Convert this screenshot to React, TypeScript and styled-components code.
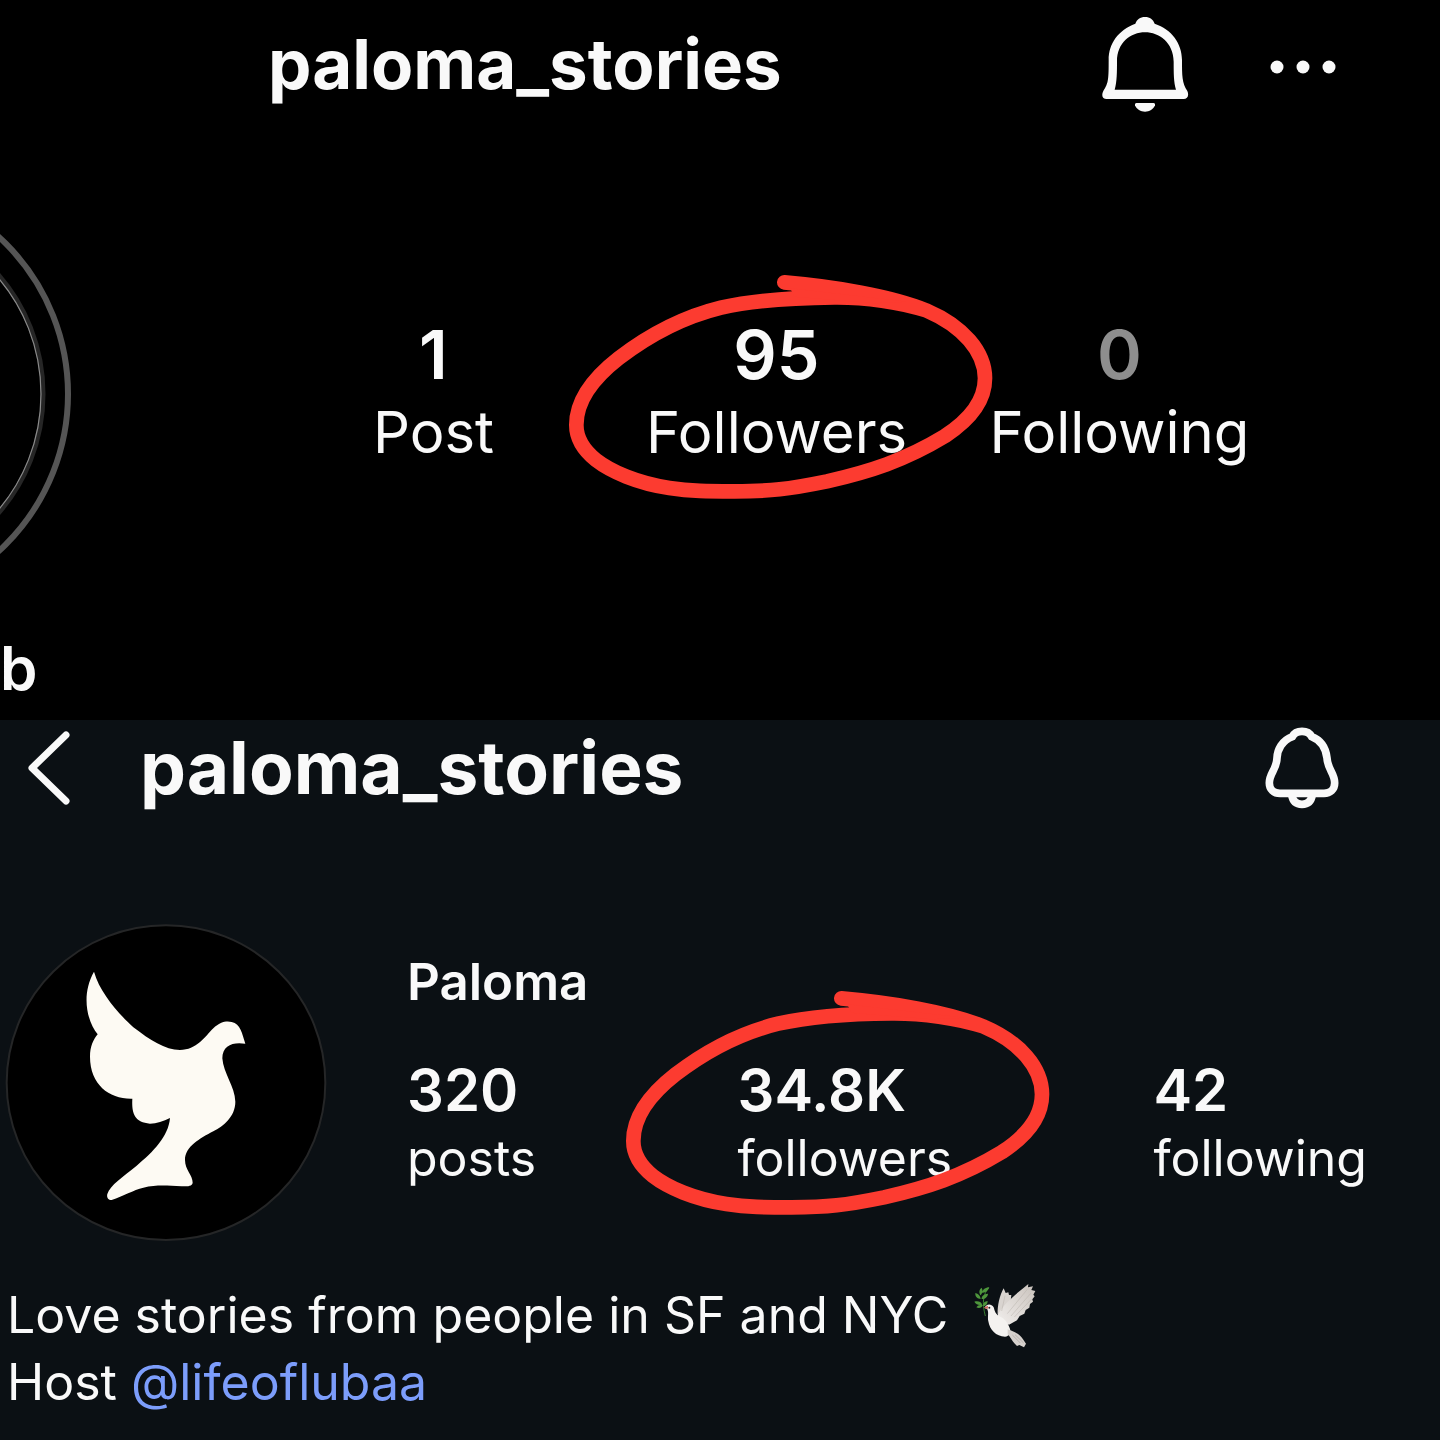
import React from "react";
import styled, { createGlobalStyle } from "styled-components";

const GlobalStyle = createGlobalStyle`
  *, *::before, *::after { box-sizing: border-box; }
  body {
    margin: 0;
    background: #0b1014;
    color: #f9f9f9;
    font-family: Inter, "Liberation Sans", sans-serif;
  }
  h1, h2, p, ul { margin: 0; padding: 0; }
  ul { list-style: none; }
  svg { display: block; flex: none; }
`;

const Page = styled.main`
  display: grid;
  grid-template-rows: 1fr 1fr;
  min-height: 100vh;
`;

const Panel = styled.section<{ $tone: string }>`
  display: flex;
  flex-direction: column;
  background: ${(p) => p.$tone};
  overflow: hidden;
`;

const IconButton = styled.button`
  display: block;
  padding: 0;
  border: 0;
  background: none;
  color: inherit;
  cursor: pointer;
`;

const BeforeHeader = styled.header`
  display: flex;
  align-items: center;
  gap: 80px;
  padding: 16px 103px 0 268px;
`;

const AfterHeader = styled.header`
  display: flex;
  align-items: center;
  gap: 68px;
  padding: 6px 100px 0 26px;
`;

const Username = styled.h1<{ $size: number }>`
  flex: 1;
  font-size: ${(p) => p.$size}px;
  line-height: 84px;
  font-weight: 700;
`;

const BeforeProfile = styled.div`
  display: flex;
  align-items: center;
  gap: 190px;
  margin-top: 120px;
  padding-right: 149px;
`;

const CenteredStats = styled.ul`
  flex: 1;
  display: grid;
  grid-template-columns: repeat(3, 1fr);
  text-align: center;
`;

const SpreadStats = styled.ul`
  display: flex;
  justify-content: space-between;
`;

const StatItem = styled.li`
  display: flex;
  flex-direction: column;
  position: relative;
`;

const Count = styled.strong<{ $large?: boolean; $muted?: boolean }>`
  font-size: ${(p) => (p.$large ? 68 : 58)}px;
  line-height: ${(p) => (p.$large ? 80 : 68)}px;
  font-weight: 600;
  color: ${(p) => (p.$muted ? "#8e8e8e" : "inherit")};
`;

const StatLabel = styled.span<{ $large?: boolean }>`
  font-size: ${(p) => (p.$large ? 58 : 50)}px;
  line-height: ${(p) => (p.$large ? 76 : 68)}px;
`;

const MarkerSvg = styled.svg<{ $large?: boolean }>`
  position: absolute;
  top: ${(p) => (p.$large ? "calc(50% - 7px)" : "calc(50% - 23px)")};
  left: ${(p) => (p.$large ? "calc(50% + 4px)" : "calc(50% - 7px)")};
  width: 480px;
  height: 250px;
  transform: translate(-50%, -50%);
  pointer-events: none;
`;

const NameTail = styled.p`
  margin-top: 76px;
  font-size: 60px;
  line-height: 80px;
  font-weight: 600;
`;

const AfterProfile = styled.div`
  display: flex;
  align-items: flex-start;
  gap: 80px;
  margin-top: 114px;
  padding: 0 73px 0 5px;
`;

const Details = styled.div`
  flex: 1;
  display: flex;
  flex-direction: column;
  gap: 40px;
  padding-top: 24px;
`;

const DisplayName = styled.h2`
  font-size: 51px;
  line-height: 68px;
  font-weight: 600;
`;

const Bio = styled.p`
  margin-top: 40px;
  padding: 0 7px;
  font-size: 50px;
  line-height: 67px;
`;

const BioLine = styled.span`
  display: flex;
  align-items: center;
  gap: 25px;
`;

const Mention = styled.a`
  color: #7c9dfb;
  text-decoration: none;
`;

function Marker({ large }: { large?: boolean }) {
  return (
    <MarkerSvg $large={large} viewBox="0 0 1440 750" fill="none" aria-hidden="true">
      <path
        stroke="#fc3b30"
        strokeWidth="44"
        strokeLinecap="round"
        strokeLinejoin="round"
        d="M730 67C880 80 1050 108 1158 152C1265 198 1332 275 1332 355C1332 430 1275 487 1212 528C1090 602 985 635 858 664C740 688 690 694 580 694C500 694 450 694 385 684C290 670 210 635 165 600C125 568 106 535 106 495C106 415 165 348 233 295C320 228 430 170 540 143C650 118 770 113 880 112C970 111 1080 126 1158 152"
      />
      <path fill="#fc3b30" d="M748 85L1100 125L1000 130L760 110Z" />
    </MarkerSvg>
  );
}

function DomeBell() {
  return (
    <svg width="88" height="96" viewBox="63 48 264 288" fill="currentColor" aria-hidden="true">
      <path
        fillRule="evenodd"
        d="M195 51C210 51 219 58 224 71C275 88 306 130 306 180C306 225 306 250 322 273C328 287 322 297 311 297H80C68 297 63 287 70 273C86 250 86 235 86 180C86 130 115 90 166 71C171 58 180 51 195 51Z
        M195 97C238 97 280 128 281 185C281 220 281 245 288 269H104C111 245 111 215 111 185C111 128 152 97 195 97Z"
      />
      <path d="M169 309H221Q227 310 225 316C220 328 208 335 195 335C182 335 170 328 165 316Q163 310 169 309Z" />
    </svg>
  );
}

function FlaredBell() {
  return (
    <svg width="76" height="84" viewBox="72 34 228 252" fill="none" stroke="currentColor" strokeWidth="23" aria-hidden="true">
      <path
        strokeLinejoin="round"
        d="M186 50C172 50 162 56 157 66C126 78 112 105 111 130C110 165 88 175 88 205C88 225 102 236 120 236H252C270 236 284 225 284 205C284 175 263 165 261 130C258 105 246 78 215 66C210 56 200 50 186 50Z"
      />
      <path d="M155 240C158 260 170 269 186 269C202 269 214 260 217 240" />
    </svg>
  );
}

function Dots() {
  return (
    <svg width="68" height="20" viewBox="0 0 68 20" fill="currentColor" aria-hidden="true">
      <circle cx="8" cy="13" r="6.5" />
      <circle cx="34" cy="13" r="6.5" />
      <circle cx="60" cy="13" r="6.5" />
    </svg>
  );
}

function BackChevron() {
  return (
    <svg width="46" height="76" viewBox="0 0 46 76" fill="none" stroke="currentColor" strokeWidth="7" strokeLinecap="round" strokeLinejoin="round" aria-hidden="true">
      <path d="M40 5L6 38L40 71" />
    </svg>
  );
}

function StoryRing() {
  return (
    <svg width="72" height="320" viewBox="0 0 72 320" fill="none" overflow="visible" aria-hidden="true">
      <circle cx="-145" cy="162" r="213" stroke="#555" strokeWidth="6" />
      <circle cx="-138" cy="162" r="181" stroke="#262626" strokeWidth="5" />
      <circle cx="-138" cy="162" r="179" stroke="#8a8a8a" strokeWidth="1.2" />
    </svg>
  );
}

function DoveAvatar() {
  return (
    <svg width="322" height="318" viewBox="15 42 966 954" role="img" aria-label="Paloma">
      <ellipse cx="498" cy="518" rx="478" ry="472" fill="#000" stroke="#252627" strokeWidth="6" />
      <path
        fill="#fdfaf3"
        d="M282 185C300 250 360 315 400 352C450 390 495 420 540 420C590 420 615 380 640 355C660 335 680 332 695 336C722 342 726 370 736 401C700 395 667 405 667 445C670 490 705 530 706 575C706 620 670 648 640 664C600 685 555 710 555 750C555 780 578 795 578 818C576 830 560 829 545 829C500 827 470 824 430 833C400 840 370 858 335 870C322 870 320 860 322 852C330 825 370 800 410 767C460 725 505 680 510 624C490 634 470 641 450 641C400 638 395 605 397 566C330 568 270 525 270 440C270 410 280 388 293 373C265 340 240 260 282 185Z"
      />
    </svg>
  );
}

function DoveEmoji() {
  return (
    <svg width="64" height="66" viewBox="42 38 192 198" role="img" aria-label="dove">
      <defs>
        <linearGradient id="wing" x1="0" y1="1" x2="1" y2="0">
          <stop offset="0" stopColor="#f1eeec" />
          <stop offset="1" stopColor="#c9c2bc" />
        </linearGradient>
      </defs>
      <path fill="#d9d4d0" d="M116 132C115 105 122 75 134 54L140 68L148 66L150 74L157 74L150 135Z" />
      <path fill="url(#wing)" d="M116 134C130 105 165 75 208 41L207 51L222 48L217 59L229 62L223 73L227 78L220 87L222 94L213 101L211 112L200 119L196 130L182 137L174 150L150 163L122 152Z" />
      <path fill="none" stroke="#b9b2ac" strokeWidth="1.5" d="M145 130L205 57M156 137L216 68M166 140L218 86M128 122L138 76" />
      <path fill="#f4f2f0" d="M77 113C80 102 96 98 104 111C107 122 110 132 121 138C138 145 146 158 152 173C158 187 151 198 138 199C111 199 92 178 88 153C85 140 90 128 85 117Z" />
      <path fill="#d6d1cd" d="M146 177L158 181C172 187 184 194 192 207L201 220L195 231L181 224L174 227L166 219C160 213 153 198 146 192Z" />
      <path fill="none" stroke="#aaa39e" strokeWidth="2" d="M160 194L184 218M168 193L194 218" />
      <path fill="#cb6259" d="M73 112L87 106L86 116Z" />
      <circle cx="91" cy="112" r="3" fill="#292320" />
      <path fill="none" stroke="#397e31" strokeWidth="3" d="M89 53C73 70 68 96 79 137" />
      <path fill="#4e963c" d="M91 51C79 51 71 58 69 67C80 68 87 62 91 51ZM68 52C60 57 59 67 65 75C71 67 72 60 68 52ZM87 70C74 71 67 78 68 86C78 87 86 80 87 70ZM49 68C48 80 55 85 65 86C64 76 58 70 49 68ZM46 94C52 104 60 105 70 103C66 94 57 91 46 94ZM52 111C60 115 69 112 72 105C63 102 56 104 52 111ZM86 92C77 93 71 98 73 108C81 106 86 101 86 92Z" />
    </svg>
  );
}

type StatProps = {
  count: string;
  label: string;
  large?: boolean;
  muted?: boolean;
  marked?: boolean;
};

function Stat({ count, label, large, muted, marked }: StatProps) {
  return (
    <StatItem>
      <Count $large={large} $muted={muted}>{count}</Count>
      <StatLabel $large={large}>{label}</StatLabel>
      {marked && <Marker large={large} />}
    </StatItem>
  );
}

export default function App() {
  return (
    <>
      <GlobalStyle />
      <Page>
        <Panel $tone="#000000">
          <BeforeHeader>
            <Username $size={69}>paloma_stories</Username>
            <IconButton type="button" aria-label="Notifications"><DomeBell /></IconButton>
            <IconButton type="button" aria-label="More options"><Dots /></IconButton>
          </BeforeHeader>
          <BeforeProfile>
            <StoryRing />
            <CenteredStats>
              <Stat large count="1" label="Post" />
              <Stat large marked count="95" label="Followers" />
              <Stat large muted count="0" label="Following" />
            </CenteredStats>
          </BeforeProfile>
          <NameTail>b</NameTail>
        </Panel>
        <Panel $tone="#0b1014">
          <AfterHeader>
            <IconButton type="button" aria-label="Back"><BackChevron /></IconButton>
            <Username $size={73}>paloma_stories</Username>
            <IconButton type="button" aria-label="Notifications"><FlaredBell /></IconButton>
          </AfterHeader>
          <AfterProfile>
            <DoveAvatar />
            <Details>
              <DisplayName>Paloma</DisplayName>
              <SpreadStats>
                <Stat count="320" label="posts" />
                <Stat marked count="34.8K" label="followers" />
                <Stat count="42" label="following" />
              </SpreadStats>
            </Details>
          </AfterProfile>
          <Bio>
            <BioLine>Love stories from people in SF and NYC <DoveEmoji /></BioLine>
            Host <Mention href="#lifeoflubaa">@lifeoflubaa</Mention>
          </Bio>
        </Panel>
      </Page>
    </>
  );
}
